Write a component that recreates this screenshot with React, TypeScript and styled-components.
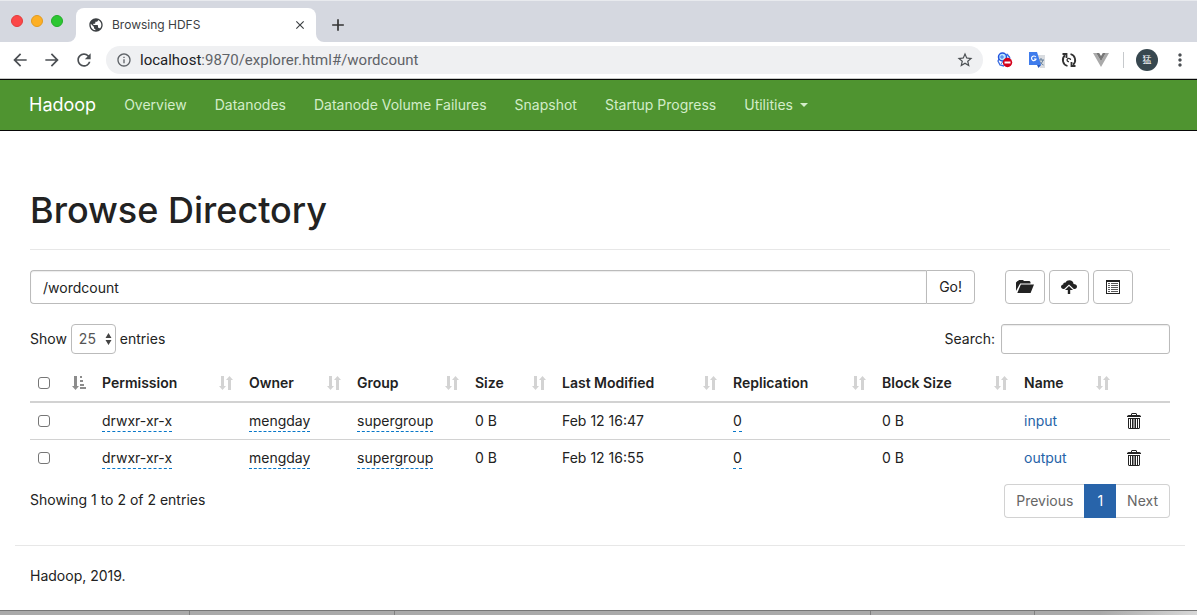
import React from "react";
import styled, { createGlobalStyle } from "styled-components";
import {
  MdAdd,
  MdArrowBack,
  MdArrowForward,
  MdClose,
  MdInfoOutline,
  MdMoreVert,
  MdPublic,
  MdRefresh,
  MdStarBorder,
} from "react-icons/md";

const GlobalStyle = createGlobalStyle`
  *, *::before, *::after { box-sizing: border-box; }
  body {
    margin: 0;
    background: #fff;
    color: #222;
    font: 14px/20px Inter, "Noto Sans CJK SC", sans-serif;
  }
  button, input, select { font: inherit; color: inherit; margin: 0; }
  button { cursor: pointer; }
  a { text-decoration: none; }
  svg { display: block; flex: none; }
`;

/* ---------- browser window ---------- */

const TabStrip = styled.div`
  display: flex;
  align-items: flex-end;
  height: 42px;
  background: #d5d8e0;
  border-top: 1px solid #e8eaee;
`;

const WindowControls = styled.div`
  display: flex;
  gap: 8px;
  align-self: center;
  padding: 0 5px 2px 11px;
`;

const ControlDot = styled.button<{ $color: string; $edge: string }>`
  width: 12px;
  height: 12px;
  padding: 0;
  border: 1px solid ${(p) => p.$edge};
  border-radius: 50%;
  background: ${(p) => p.$color};
`;

const Tab = styled.div`
  display: flex;
  align-items: center;
  gap: 8px;
  width: 240px;
  height: 34px;
  padding: 0 8px 0 12px;
  border-radius: 8px 8px 0 0;
  background: #fff;
  color: #3c4043;
  font: 12px/16px Inter, sans-serif;
`;

const TabTitle = styled.span`
  flex: 1;
`;

const IconButton = styled.button<{ $size?: number; $color?: string }>`
  display: flex;
  align-items: center;
  justify-content: center;
  width: ${(p) => p.$size ?? 20}px;
  height: ${(p) => p.$size ?? 20}px;
  padding: 0;
  border: 0;
  background: none;
  color: ${(p) => p.$color ?? "#4b4f53"};
`;

const NewTab = styled(IconButton)`
  align-self: center;
  margin: 6px 0 0 4px;
`;

const Toolbar = styled.div`
  display: flex;
  align-items: center;
  gap: 12px;
  height: 37px;
  padding: 0 7px 0 10px;
  border-bottom: 1px solid #c8cbc8;
`;

const AddressBar = styled.div`
  display: flex;
  flex: 1;
  align-items: center;
  gap: 8px;
  height: 28px;
  padding: 0 8px 0 10px;
  border-radius: 14px;
  background: #eff0f2;
  color: #5f6368;
`;

const Address = styled.span`
  flex: 1;
  font: 15px/20px Roboto, sans-serif;
  b {
    color: #202124;
    font-weight: 400;
  }
`;

const Extensions = styled.div`
  display: flex;
  align-items: center;
  gap: 12px;
`;

const Divider = styled.span`
  width: 1px;
  height: 16px;
  background: #c6c9cc;
`;

const Avatar = styled.button`
  width: 22px;
  height: 22px;
  padding: 0;
  border: 0;
  border-radius: 50%;
  background: #37474f;
  color: #fff;
  font: 9px/20px "Noto Sans CJK SC", sans-serif;
`;

/* ---------- navigation ---------- */

const Navbar = styled.nav`
  display: flex;
  align-items: center;
  height: 52px;
  padding: 0 15px;
  border: solid #080808;
  border-width: 1px 0;
  background: #4f9430;
`;

const Brand = styled.a`
  padding: 0 14px;
  color: #fff;
  font-size: 18px;
`;

const NavLink = styled.a`
  display: flex;
  align-items: center;
  gap: 7px;
  padding: 0 14px;
  color: #d3edc9;
`;

const Caret = styled.span`
  border: 4px solid transparent;
  border-top-color: currentColor;
  border-bottom-width: 0;
`;

/* ---------- page ---------- */

const Page = styled.main`
  padding: 60px 12px 0 15px;
`;

const Content = styled.div`
  padding: 0 15px;
`;

const PageHeader = styled.header`
  padding-bottom: 19px;
  border-bottom: 1px solid #e7e7e7;
`;

const Title = styled.h1`
  margin: 0;
  font-size: 36px;
  font-weight: 500;
  line-height: 39px;
`;

const PathRow = styled.div`
  display: grid;
  grid-template-columns: 945fr 165fr;
  column-gap: 30px;
  margin: 20px 0;
`;

const PathForm = styled.form`
  display: flex;
`;

const PathInput = styled.input`
  flex: 1;
  min-width: 0;
  height: 34px;
  padding: 0 12px;
  border: 1px solid #bbb;
  border-right: 0;
  border-radius: 4px 0 0 4px;
  box-shadow: inset 0 1px 1px #ececec;
`;

const Button = styled.button<{ $attached?: boolean }>`
  display: flex;
  align-items: center;
  justify-content: center;
  height: 34px;
  min-width: 40px;
  padding: 0 ${(p) => (p.$attached ? 12 : 10)}px;
  border: 1px solid #bbb;
  border-radius: ${(p) => (p.$attached ? "0 4px 4px 0" : "4px")};
  background: #fff;
`;

const Actions = styled.div`
  display: flex;
  gap: 4px;
`;

const Controls = styled.div`
  display: flex;
  justify-content: space-between;
  margin-bottom: 10px;
`;

const Label = styled.label`
  display: flex;
  align-items: center;
  gap: 4px;
`;

const SelectBox = styled.span`
  position: relative;
  svg {
    position: absolute;
    right: 4px;
    top: 9px;
    pointer-events: none;
  }
`;

const Select = styled.select`
  display: block;
  width: 45px;
  height: 30px;
  padding: 0 7px;
  border: 1px solid #bbb;
  border-radius: 4px;
  background: #fff;
  color: #555;
  appearance: none;
`;

const SearchInput = styled.input`
  width: 169px;
  height: 30px;
  margin-left: 2px;
  padding: 0 10px;
  border: 1px solid #bbb;
  border-radius: 3px;
  box-shadow: inset 0 1px 1px #ececec;
`;

const Table = styled.table`
  width: 100%;
  border-collapse: collapse;
  table-layout: fixed;

  th,
  td {
    padding: 8px;
    text-align: left;
    vertical-align: middle;
    white-space: nowrap;
  }
  th {
    height: 38px;
    font-weight: 600;
    border-bottom: 2px solid #d2d2d2;
  }
  td {
    height: 37px;
  }
  tbody tr + tr td {
    border-top: 1px solid #d2d2d2;
  }
`;

const HeadCell = styled.div`
  display: flex;
  align-items: center;
  justify-content: space-between;
`;

const CheckBox = styled.input.attrs({ type: "checkbox" })`
  display: block;
  width: 12px;
  height: 12px;
  border: 1px solid #767676;
  border-radius: 3px;
  background: #fff;
  appearance: none;
  &:checked {
    background: #2a66ad;
  }
`;

const Editable = styled.span`
  padding-bottom: 2px;
  border-bottom: 1px dashed #0877c8;
`;

const FileLink = styled.a`
  color: #2563a8;
`;

const TableFooter = styled.div`
  display: flex;
  justify-content: space-between;
  margin-top: 7px;
`;

const Info = styled.div`
  padding-top: 6px;
`;

const Pager = styled.nav`
  display: flex;
`;

const PageButton = styled.button<{ $active?: boolean }>`
  height: 34px;
  padding: 0 ${(p) => (p.$active ? 12 : 11)}px;
  border: 1px solid ${(p) => (p.$active ? "#2864aa" : "#d2d2d2")};
  background: ${(p) => (p.$active ? "#2864aa" : "#fff")};
  color: ${(p) => (p.$active ? "#fff" : "#666")};
  &:first-child {
    border-right: 0;
    border-radius: 4px 0 0 4px;
  }
  &:last-child {
    border-left: 0;
    border-radius: 0 4px 4px 0;
  }
`;

const FooterWrap = styled.div`
  padding: 0 12px 0 15px;
`;

const Footer = styled.footer`
  margin-top: 27px;
  padding: 20px 15px 24px;
  border-top: 1px solid #e7e7e7;
`;

const Desktop = styled.div`
  display: flex;
  height: 5px;
  border-top: 1px solid #777;
  background: #aaa;
`;

const DesktopPane = styled.span<{ $share: number }>`
  flex: ${(p) => p.$share};
  border-right: 1px solid #808080;
  &:last-child {
    border-right: 0;
    background: linear-gradient(90deg, #aaa 40%, #d8d8d8);
  }
`;

/* ---------- icons ---------- */

const TabCurve = ({ flip = false }: { flip?: boolean }) => (
  <svg width="8" height="8" viewBox="0 0 8 8" fill="#fff">
    <path d={flip ? "M0 0a8 8 0 0 0 8 8H0z" : "M8 0a8 8 0 0 1-8 8h8z"} />
  </svg>
);

const SortBoth = () => (
  <svg width="14" height="14" viewBox="0 0 14 14" fill="#d3d3d3">
    <path d="M2 0h3v10h2l-3.500 4L0 10h2zM9 14h3V4h2l-3.500-4L7 4h2z" />
  </svg>
);

const SortAscending = () => (
  <svg width="14" height="14" viewBox="0 0 14 14" fill="#8c8c8c">
    <path d="M2 0h3v10h2l-3.500 4L0 10h2zM8 0h2v2H8zM8 4h3v2H8zM8 8h4v2H8zM8 11h6v2H8z" />
  </svg>
);

const SelectArrows = () => (
  <svg width="7" height="12" viewBox="0 0 7 12" fill="#444">
    <path d="M3.500 0L6.500 5h-6zM3.500 12L.5 7h6z" />
  </svg>
);

const FolderOpen = () => (
  <svg width="18" height="14" viewBox="0 0 18 14" fill="#222">
    <path d="M0 11V2.500L1.500 1H2l1-1h4l1 1h5.500l1 1v1.500H4.200L3 5.500zM4.800 4.500H18L14.600 13H1.300z" />
  </svg>
);

const CloudUpload = () => (
  <svg width="16" height="14" viewBox="0 0 16 14" fill="#222">
    <path d="M2.500 9C1 9 0 8 0 6.800 0 5.600 1 4.600 2.200 4.500 2.100 2.900 3.500 2.100 4.700 2.500 5.300 1 6.600 .3 8.300 .3c2.400 0 4.200 1.600 4.300 3.700C14.600 4 16 5.100 16 6.500 16 8 15 9 13.600 9h-.8L8 4.500 3.200 9z" />
    <path d="M8 6l4 4H9.200v4H6.800v-4H4z" />
  </svg>
);

const ListAlt = () => (
  <svg width="14" height="14" viewBox="0 0 14 14" fill="#222">
    <path fillRule="evenodd" d="M0 0h14v14H0zM1 2v11h12V2z" />
    <path d="M2 3h2v1H2zM5 3h7v1H5zM2 5h2v1H2zM5 5h7v1H5zM2 7h2v1H2zM5 7h7v1H5zM2 9h2v1H2zM5 9h7v1H5zM2 11h2v1H2zM5 11h7v1H5z" opacity=".75" />
  </svg>
);

const Trash = () => (
  <svg width="14" height="16" viewBox="0 0 14 16" fill="#222">
    <path fillRule="evenodd" d="M4 2V1l1-1h4l1 1v1h2.500L14 3v1H0V3l1.500-1zm1 0h4V1H5z" />
    <path
      fillRule="evenodd"
      d="M1 5h12v10l-1 1H2l-1-1zm1 1v9h1V6zM4 6v9h1V6zM6.500 6v9h1V6zM9 6v9h1V6zM11 6v9h1V6z"
    />
  </svg>
);

const BlockedSearch = () => (
  <svg width="16" height="16" viewBox="0 0 16 16" fill="none">
    <path d="M2 7l-1 2 2 4 4 1M10 2l3 4" stroke="#3a6be0" strokeWidth="1.300" />
    <circle cx="5.500" cy="5" r="4" fill="#b9e6ff" stroke="#2453dd" strokeWidth="1.500" />
    <path d="M3 5h4M5 3v4M7 8l-3 4M9 2l3 2 1 3" stroke="#3e77e8" />
    <circle cx="10.500" cy="10.500" r="4.700" fill="#d4001a" />
    <path d="M7.500 10.500h6" stroke="#fff" strokeWidth="2" />
  </svg>
);

const Translate = () => (
  <svg width="16" height="16" viewBox="0 0 16 16" fill="none">
    <path d="M7 3h9v13h-5z" fill="#d9dce0" />
    <path d="M9 8h6M12 6v2M14 8c-1 3-2 4-4 5M10.500 9c1 2 2 3 4 4" stroke="#607d9a" />
    <path d="M0 0h8l4 13H0z" fill="#3f7cec" />
    <path d="M8 13h4l-2.500 3z" fill="#2457bd" />
    <path d="M6.800 5A2.300 2.300 0 1 0 7 7.200V7H5" stroke="#fff" strokeWidth="1.200" />
  </svg>
);

const SyncCircle = () => (
  <svg width="16" height="16" viewBox="0 0 16 16" fill="none" stroke="#333" strokeWidth="1.800">
    <path d="M6.500 14A6.200 6.200 0 0 1 4 3.300M9.500 2A6.200 6.200 0 0 1 12 12.700" />
    <path d="M1.500 2h4v4M14.500 14h-4v-4" />
    <path d="M9.500 8a1.700 1.700 0 1 0-1.500 1.700" strokeWidth="1.300" />
  </svg>
);

const VueMark = () => (
  <svg width="16" height="14" viewBox="0 0 16 14">
    <path d="M0 0h3.200L8 8.300 12.800 0H16L8 14z" fill="#aaa" />
    <path d="M3.200 0h3L8 3.100 9.800 0h3L8 8.300z" fill="#777" />
  </svg>
);

/* ---------- data ---------- */

const navItems = ["Overview", "Datanodes", "Datanode Volume Failures", "Snapshot", "Startup Progress"];

const columns = [
  { title: "Permission", width: 147 },
  { title: "Owner", width: 108 },
  { title: "Group", width: 118 },
  { title: "Size", width: 87 },
  { title: "Last Modified", width: 171 },
  { title: "Replication", width: 149 },
  { title: "Block Size", width: 142 },
  { title: "Name", width: 102 },
];

const ColumnSize = styled.col<{ $share: number }>`
  width: calc(100% * ${(p) => p.$share} / 1140);
`;

const files = [
  { name: "input", modified: "Feb 12 16:47" },
  { name: "output", modified: "Feb 12 16:55" },
];

export default function App() {
  return (
    <>
      <GlobalStyle />
      <TabStrip>
        <WindowControls>
          <ControlDot $color="#fc4748" $edge="#e33b3c" aria-label="Close window" />
          <ControlDot $color="#fdaf24" $edge="#e29b1f" aria-label="Minimize window" />
          <ControlDot $color="#2cc732" $edge="#22ad29" aria-label="Zoom window" />
        </WindowControls>
        <TabCurve />
        <Tab>
          <MdPublic size={16} />
          <TabTitle>Browsing HDFS</TabTitle>
          <IconButton $size={16} $color="#3c4043" aria-label="Close tab">
            <MdClose size={14} />
          </IconButton>
        </Tab>
        <TabCurve flip />
        <NewTab $color="#333" aria-label="New tab">
          <MdAdd size={20} />
        </NewTab>
      </TabStrip>

      <Toolbar>
        <IconButton aria-label="Back"><MdArrowBack size={20} /></IconButton>
        <IconButton aria-label="Forward"><MdArrowForward size={20} /></IconButton>
        <IconButton aria-label="Reload"><MdRefresh size={20} /></IconButton>
        <AddressBar>
          <MdInfoOutline size={16} />
          <Address><b>localhost</b>:9870/explorer.html#/wordcount</Address>
          <IconButton aria-label="Bookmark"><MdStarBorder size={18} /></IconButton>
        </AddressBar>
        <Extensions>
          <IconButton aria-label="Search blocker"><BlockedSearch /></IconButton>
          <IconButton aria-label="Translate"><Translate /></IconButton>
          <IconButton aria-label="Sync"><SyncCircle /></IconButton>
          <IconButton aria-label="Vue devtools"><VueMark /></IconButton>
          <Divider />
          <Avatar aria-label="Profile">猛</Avatar>
          <IconButton aria-label="Menu"><MdMoreVert size={20} /></IconButton>
        </Extensions>
      </Toolbar>

      <Navbar>
        <Brand href="#">Hadoop</Brand>
        {navItems.map((item) => (
          <NavLink href="#" key={item}>{item}</NavLink>
        ))}
        <NavLink href="#">Utilities <Caret /></NavLink>
      </Navbar>

      <Page>
        <Content>
          <PageHeader>
            <Title>Browse Directory</Title>
          </PageHeader>

          <PathRow>
            <PathForm onSubmit={(e) => e.preventDefault()}>
              <PathInput type="text" defaultValue="/wordcount" aria-label="Directory" />
              <Button type="submit" $attached>Go!</Button>
            </PathForm>
            <Actions>
              <Button aria-label="Create directory"><FolderOpen /></Button>
              <Button aria-label="Upload files"><CloudUpload /></Button>
              <Button aria-label="Cut and paste"><ListAlt /></Button>
            </Actions>
          </PathRow>

          <Controls>
            <Label>
              Show
              <SelectBox>
                <Select defaultValue="25">
                  <option>25</option>
                  <option>50</option>
                  <option>100</option>
                </Select>
                <SelectArrows />
              </SelectBox>
              entries
            </Label>
            <Label>
              Search:
              <SearchInput type="search" />
            </Label>
          </Controls>

          <Table>
            <colgroup>
              <ColumnSize $share={64} />
              {columns.map((c) => (
                <ColumnSize key={c.title} $share={c.width} />
              ))}
              <ColumnSize $share={52} />
            </colgroup>
            <thead>
              <tr>
                <th>
                  <HeadCell>
                    <CheckBox aria-label="Select all" />
                    <SortAscending />
                  </HeadCell>
                </th>
                {columns.map((c) => (
                  <th key={c.title}>
                    <HeadCell>{c.title}<SortBoth /></HeadCell>
                  </th>
                ))}
                <th />
              </tr>
            </thead>
            <tbody>
              {files.map((f) => (
                <tr key={f.name}>
                  <td><CheckBox aria-label={`Select ${f.name}`} /></td>
                  <td><Editable>drwxr-xr-x</Editable></td>
                  <td><Editable>mengday</Editable></td>
                  <td><Editable>supergroup</Editable></td>
                  <td>0 B</td>
                  <td>{f.modified}</td>
                  <td><Editable>0</Editable></td>
                  <td>0 B</td>
                  <td><FileLink href="#">{f.name}</FileLink></td>
                  <td>
                    <IconButton $size={16} aria-label={`Delete ${f.name}`}><Trash /></IconButton>
                  </td>
                </tr>
              ))}
            </tbody>
          </Table>

          <TableFooter>
            <Info>Showing 1 to 2 of 2 entries</Info>
            <Pager aria-label="Pages">
              <PageButton>Previous</PageButton>
              <PageButton $active>1</PageButton>
              <PageButton>Next</PageButton>
            </Pager>
          </TableFooter>
        </Content>
      </Page>
      <FooterWrap>
        <Footer>Hadoop, 2019.</Footer>
      </FooterWrap>
      <Desktop>
        <DesktopPane $share={190} />
        <DesktopPane $share={204} />
        <DesktopPane $share={477} />
        <DesktopPane $share={163} />
        <DesktopPane $share={163} />
      </Desktop>
    </>
  );
}
